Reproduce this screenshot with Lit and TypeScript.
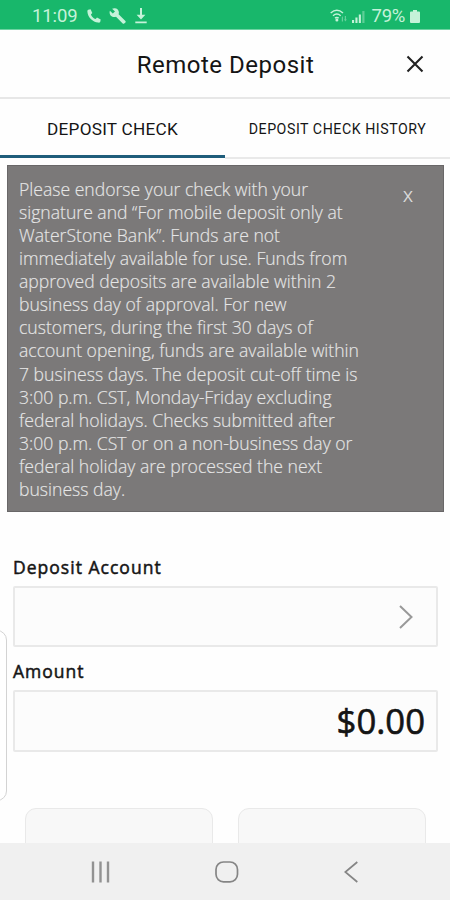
import { LitElement, html, css } from "lit";
import { customElement } from "lit/decorators.js";

const NOTICE = [
  "Please endorse your check with your",
  "signature and “For mobile deposit only at",
  "WaterStone Bank”. Funds are not",
  "immediately available for use. Funds from",
  "approved deposits are available within 2",
  "business day of approval. For new",
  "customers, during the first 30 days of",
  "account opening, funds are available within",
  "7 business days. The deposit cut-off time is",
  "3:00 p.m. CST, Monday-Friday excluding",
  "federal holidays. Checks submitted after",
  "3:00 p.m. CST or on a non-business day or",
  "federal holiday are processed the next",
  "business day.",
];

@customElement("status-bar")
class StatusBar extends LitElement {
  static styles = css`
    :host { display: flex; box-sizing: border-box; height: 30px; padding: 3px 30px 0 32px; align-items: center;
      background: #18b76b; border-bottom: 1px solid #6dd3a2; color: #c5f2d9; font: 400 18.5px/26px Roboto, sans-serif; }
    .time { width: 55px; letter-spacing: -0.1px; }
    .gap { flex: 1; }
    .pct { letter-spacing: -0.3px; margin: 0 5px 0 7px; }
    svg { display: block; fill: currentColor; }
    .tool { margin-left: 8px; }
    .down { margin-left: 9px; }
    .signal { margin-left: 4px; }
  `;
  render() {
    return html`
      <span class="time">11:09</span>
      <svg width="14" height="14" viewBox="0 0 14 14"><path d="M1.2.8 3.6.3 5.3 4 3.9 5.4C4.7 7.5 6.4 9.2 8.7 10.1L10 8.6l3.7 1.8-.5 2.5C12.9 13.6 12 13.7 11.2 13.6 5.5 13 .8 8.3.4 2.8.4 1.9.5 1.2 1.2.8Z"/></svg>
      <svg class="tool" width="17" height="16" viewBox="0 0 17 16"><path d="M5.2.3C7.9.1 10 2.1 9.9 4.6 9.9 5.2 9.8 5.7 9.6 6.2L16.4 12.9C16.9 13.4 16.8 14 16.4 14.4L15.2 15.5C14.7 15.9 14.2 15.8 13.7 15.4L7 8.7C3.8 9.9.3 7.4.6 3.9L.9 2.7 3.8 5.6 6 3.5 3.1.8Z"/></svg>
      <svg class="down" width="12" height="16" viewBox="0 0 12 16"><path d="M5 0h2v6.8h3.4L6 11.4 1.6 6.8H5ZM.3 13.5h11.4v1.8H.3Z"/></svg>
      <span class="gap"></span>
      <svg width="18" height="14" viewBox="0 0 18 14"><g fill="none" stroke="currentColor" stroke-width="1.5"><path d="M.7 4Q6.8-1.4 13 4M3 6.7Q6.8 3.4 10.7 6.7M5 9.2Q6.8 7.8 8.7 9.2"/></g><circle cx="6.9" cy="11" r="1.5"/><path opacity=".45" d="M11.5 9 13 7v5.5h-1.2V9ZM14.8 7H16v3.6l1-.3-1.6 2.2-1.5-2.2.9.3Z"/></svg>
      <svg class="signal" width="13" height="13" viewBox="0 0 13 13"><path d="M0 10h2.1v3H0ZM3.4 7.5h2.1V13H3.4Z"/><path d="M6.8 4.5h2.1V13H6.8Z"/><path opacity=".4" d="M10.3 1h2.2v12h-2.2Z"/></svg>
      <span class="pct">79%</span>
      <svg width="10" height="13" viewBox="0 0 10 13"><path d="M3 0h4v1.5h2q1 0 1 1V12q0 1-1 1H1q-1 0-1-1V2.5q0-1 1-1h2Z"/></svg>
    `;
  }
}

@customElement("nav-bar")
class NavBar extends LitElement {
  static styles = css`
    :host { display: flex; height: 57px; background: #f0f0f0; align-items: center; }
    svg { display: block; fill: none; stroke: #858585; stroke-width: 1.7; margin-top: 1px; }
    .recent { margin-left: 91px; stroke: #929292; stroke-width: 2.4; }
    .home { margin-left: 104px; }
    .back { margin-left: 105px; }
  `;
  render() {
    return html`
      <svg class="recent" width="20" height="22" viewBox="0 0 20 22"><path d="M2 .5v21M9.5.5v21M17 .5v21"/></svg>
      <svg class="home" width="24" height="22" viewBox="0 0 24 22"><rect x="1" y="1" width="21.5" height="19.8" rx="7.5"/></svg>
      <svg class="back" width="15" height="22" viewBox="0 0 15 22"><path d="M13.3 1 1.3 11l12 10"/></svg>
    `;
  }
}

@customElement("app-root")
class AppRoot extends LitElement {
  static styles = css`
    :host { display: flex; flex-direction: column; position: relative; width: 450px; height: 900px; overflow: hidden;
      background: #fefefe; color: #151515; font-family: "Open Sans", sans-serif; }
    header { display: grid; grid-template-columns: 60px 1fr 60px; align-items: center; height: 67px; border-bottom: 2px solid #e7e7e7; font-family: Roboto, sans-serif; }
    h1 { grid-column: 2; margin: 2px 0 0 1px; text-align: center; font-size: 24px; font-weight: 400; line-height: 30px; letter-spacing: 0.5px; white-space: nowrap; }
    .close { margin-left: 16px; display: block; stroke: #222; stroke-width: 2.1; fill: none; }
    .tabs { display: grid; grid-template-columns: 225px 225px; height: 60px; font: 500 17px/60px Roboto, sans-serif; text-align: center; white-space: nowrap; }
    .tab { box-sizing: border-box; height: 60px; border-bottom: 2px solid #e9e9e9; }
    .tab.first { height: 59px; border-bottom: 3px solid #1f5d7b; font-weight: 400; font-size: 17.2px; letter-spacing: 0.25px; }
    .second { font-size: 14.2px; letter-spacing: 0.54px; font-weight: 450; }
    .notice { display: flex; justify-content: space-between; box-sizing: border-box; width: 437px; height: 347px; margin: 6px 0 0 7px; padding: 11.5px 30px 0 11px;
      border: 1px solid #696768; background: #7b7979; color: #e6e6e6; font-size: 17.6px; line-height: 23.13px; font-weight: 300; }
    .line { display: block; white-space: nowrap; -webkit-text-stroke: 0.15px #e6e6e6; }
    .dismiss { font-size: 20px; line-height: 34px; -webkit-text-stroke: 0.2px #e6e6e6; }
    main { flex: 1; min-height: 0; overflow: hidden; padding: 0 12px 0 13px; }
    .label { display: block; font-size: 17.5px; line-height: 24px; font-weight: 400; letter-spacing: 1.02px; -webkit-text-stroke: 0.5px #151515; }
    .label.account { margin: 43px 0 7px; }
    .label.amount { margin: 12px 0 7px; }
    .field { display: flex; align-items: center; justify-content: flex-end; box-sizing: border-box; height: 61px; border: 2px solid #e9e9e9; border-radius: 2px; background: #fcfcfc; }
    .field.money { height: 62px; }
    .chevron { fill: none; stroke: #999; stroke-width: 2; margin-right: 23px; }
    .value { font-size: 34.7px; line-height: 40px; font-weight: 400; padding-right: 11px; -webkit-text-stroke: 0.6px #111; }
    .cards { display: grid; grid-template-columns: 188px 188px; gap: 25px; margin: 56px 0 0 12px; }
    .card { height: 100px; box-sizing: border-box; border: 1px solid #e9e9e9; border-radius: 11px; background: #f8f8f8; }
    .edge { position: absolute; left: -20px; top: 630px; width: 27px; height: 171px; box-sizing: border-box; border: 1px solid #d3d3d3; border-radius: 10px; background: #fff; }
  `;
  render() {
    return html`
      <status-bar></status-bar>
      <header>
        <h1>Remote Deposit</h1>
        <svg class="close" width="18" height="18" viewBox="0 0 18 18"><path d="m1.5 1.5 15 15m0-15-15 15"/></svg>
      </header>
      <div class="tabs">
        <div class="tab first">DEPOSIT CHECK</div>
        <div class="tab second">DEPOSIT CHECK HISTORY</div>
      </div>
      <section class="notice">
        <div>${NOTICE.map((line) => html`<span class="line">${line}</span>`)}</div>
        <span class="dismiss">x</span>
      </section>
      <main>
        <span class="label account">Deposit Account</span>
        <div class="field"><svg class="chevron" width="14" height="24" viewBox="0 0 14 24"><path d="m1 1 11.5 11L1 23"/></svg></div>
        <span class="label amount">Amount</span>
        <div class="field money"><span class="value">$0.00</span></div>
        <div class="cards"><div class="card"></div><div class="card"></div></div>
      </main>
      <nav-bar></nav-bar>
      <div class="edge"></div>
    `;
  }
}
